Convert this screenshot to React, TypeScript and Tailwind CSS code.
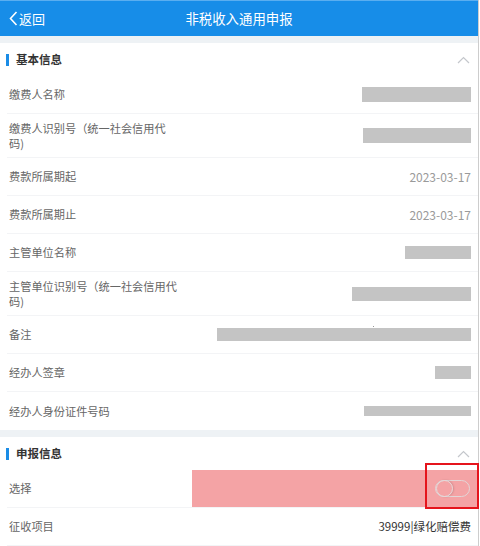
import React from "react";

const font = { fontFamily: '"Noto Sans CJK SC", "Noto Sans", sans-serif' };

function Chevron() {
  return (
    <svg width="13" height="8" viewBox="0 0 13 8" className="mr-[8px]">
      <polyline points="1,7 6.5,1.5 12,7" fill="none" stroke="#c4c7cc" strokeWidth="1.2" />
    </svg>
  );
}

function SectionHeader({ title }: { title: string }) {
  return (
    <div className="h-[33px] flex items-center justify-between pt-[1px]">
      <div className="flex items-center">
        <div className="ml-[6px] w-[3px] h-[12px] bg-[#1a8ce6]" />
        <div className="ml-[7px] text-[11.5px] font-bold text-[#333]">{title}</div>
      </div>
      <Chevron />
    </div>
  );
}

function Bar({ w, h }: { w: number; h: number }) {
  return <div className="bg-[#c4c4c4]" style={{ width: w, height: h }} />;
}

function Row({
  label,
  children,
  two,
  last,
}: {
  label: React.ReactNode;
  children?: React.ReactNode;
  two?: boolean;
  last?: boolean;
}) {
  return (
    <div
      className={`ml-[7px] flex items-center justify-between pr-[7px] ${
        two ? "h-[44px]" : "h-[38px]"
      } ${last ? "" : "border-b border-[#f3f4f6]"}`}
    >
      <div className="pl-[2px] w-[172px] text-[11.2px] leading-[15px] text-[#666]">{label}</div>
      <div className="flex items-center justify-end">{children}</div>
    </div>
  );
}

export default function App() {
  return (
    <div className="w-[480px] h-[546px] overflow-hidden bg-white flex" style={font}>
      <div className="w-[479px] border-r border-[#cdcdcd] flex flex-col">
        <div className="h-[36px] shrink-0 bg-[#178de8] border-t border-[#5aaef0] relative flex items-center justify-center">
          <div className="absolute left-[9px] top-0 h-full flex items-center text-white text-[13px]">
            <svg width="9" height="15" viewBox="0 0 9 15" className="mr-[1px]">
              <polyline points="7.5,1 1.5,7.5 7.5,14" fill="none" stroke="#fff" strokeWidth="1.6" />
            </svg>
            <span>返回</span>
          </div>
          <div className="text-white text-[13.4px]">非税收入通用申报</div>
        </div>
        <div className="h-[7px] shrink-0 bg-[#eef2f5]" />
        <SectionHeader title="基本信息" />
        <Row label="缴费人名称">
          <Bar w={109} h={15} />
        </Row>
        <Row label={<>缴费人识别号（统一社会信用代码)</>} two>
          <Bar w={108} h={15} />
        </Row>
        <Row label="费款所属期起">
          <span className="text-[12px] text-[#9a9a9a]">2023-03-17</span>
        </Row>
        <Row label="费款所属期止">
          <span className="text-[12px] text-[#9a9a9a]">2023-03-17</span>
        </Row>
        <Row label="主管单位名称">
          <Bar w={66} h={13} />
        </Row>
        <Row label={<>主管单位识别号（统一社会信用代码)</>} two>
          <Bar w={119} h={14} />
        </Row>
        <Row label="备注">
          <div className="relative">
            <Bar w={254} h={13} />
            <div className="absolute left-[156px] top-[-2px] w-[1px] h-[1px] bg-[#999]" />
          </div>
        </Row>
        <Row label="经办人签章">
          <Bar w={36} h={13} />
        </Row>
        <Row label="经办人身份证件号码" last>
          <Bar w={107} h={10} />
        </Row>
        <div className="h-[7px] shrink-0 bg-[#eef2f5]" />
        <SectionHeader title="申报信息" />
        <div className="relative">
          <Row label="选择">
            <div className="h-[16px]" />
          </Row>
          <div className="absolute left-[192px] top-0 w-[287px] h-[37px] bg-[#f4a3a5]" />
          <div className="absolute left-[435px] top-[10px] w-[35px] h-[17px] rounded-full border border-[#e3d6d7] flex items-center">
            <div className="w-[17px] h-[17px] rounded-full border border-[#e6d9da] shadow-[1px_0_2px_rgba(0,0,0,0.15)]" />
          </div>
          <div className="absolute left-[425px] top-[-7px] w-[54px] h-[46px] border-2 border-[#e5141c]" />
        </div>
        <Row label="征收项目">
          <span className="text-[11.5px] text-[#333]">39999|绿化赔偿费</span>
        </Row>
      </div>
    </div>
  );
}
